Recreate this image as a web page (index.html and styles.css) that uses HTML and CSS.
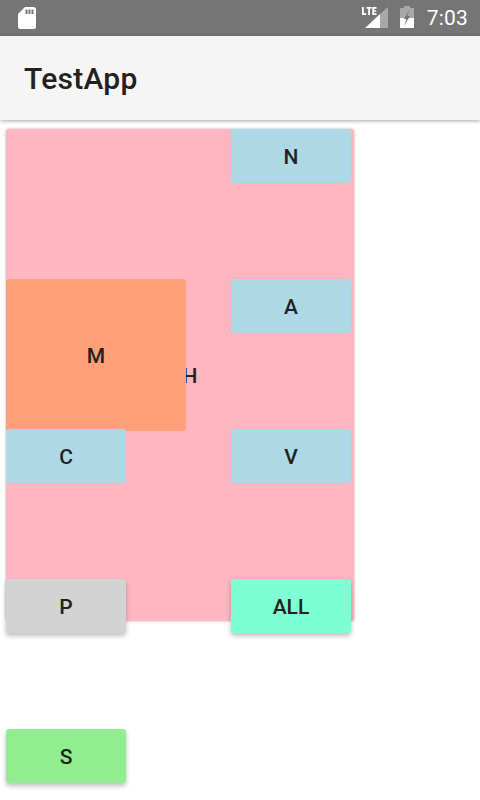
FILE: index.html
```html
<!DOCTYPE html>
<html>
<head>
    <meta charset="utf-8"/>
    <title>TestApp</title>
    <link rel="stylesheet" href="styles.css">
</head>
<body>
    <div class="status">
        <svg class="sd" width="18" height="22" viewBox="0 0 18 22">
            <path fill="#fff" d="M7 0H15.500Q18 0 18 2.500V19.500Q18 22 15.500 22H2.500Q0 22 0 19.500V7Z"/>
            <path fill="#757575" d="M7.500 2.500H9.500V7H7.500ZM10.500 2.500H12.500V7H10.500ZM13.500 2.500H15.500V7H13.500Z"/>
        </svg>
        <span class="status-right">
            <svg class="signal" width="26" height="22" viewBox="0 0 26 22">
                <path fill="#a8a8a8" d="M26 1V22H18V8Z"/>
                <path fill="#fff" d="M18 8V22H3Z"/>
                <path fill="#fff" d="M0 1H1.800V7.300H4.200V9H0ZM4.600 1H9.600V2.700H8V9H6.200V2.700H4.600ZM10.300 1H14.500V2.700H12.100V4.200H14.200V5.800H12.100V7.300H14.500V9H10.300Z"/>
            </svg>
            <svg class="battery" width="14" height="22" viewBox="0 0 14 22">
                <path fill="#a8a8a8" d="M4 0H10V2H14V12H0V2H4Z"/>
                <path fill="#fff" d="M0 12H14V22H0Z"/>
                <path fill="#757575" d="M9.500 4L4 13H6.500L4 20L10 10H7.500Z"/>
            </svg>
            <span class="clock">7:03</span>
        </span>
    </div>
    <header class="appbar">TestApp</header>
    <main class="board">
        <div class="btn pink">H</div>
        <div class="btn blue n">N</div>
        <div class="btn blue a">A</div>
        <div class="btn salmon">M</div>
        <div class="btn blue c">C</div>
        <div class="btn blue v">V</div>
        <div class="btn gray raised p">P</div>
        <div class="btn mint raised all">ALL</div>
        <div class="btn green raised s">S</div>
    </main>
</body>
</html>
```
FILE: styles.css
```css
html, body {
    margin: 0;
    height: 100%;
    overflow: hidden;
    background-color: #fff;
}
body {
    font-family: "Roboto", "Liberation Sans", sans-serif;
    color: #212121;
}
.status {
    height: 36px;
    background-color: #757575;
    display: flex;
    align-items: center;
    justify-content: space-between;
    padding: 0 12px 0 18px;
}
.sd {
    margin-top: -1px;
}
.status-right {
    display: flex;
    align-items: center;
}
.signal {
    margin-top: -2px;
}
.battery {
    margin: -2px 13px 0 12px;
}
.clock {
    color: #fff;
    font-size: 21px;
    letter-spacing: .2px;
}
.appbar {
    height: 84px;
    box-sizing: border-box;
    line-height: 84px;
    padding: 1px 0 0 24px;
    background-color: #f5f5f5;
    font-size: 30px;
    font-weight: 500;
    letter-spacing: .25px;
    box-shadow: 0 1px 4px rgba(0,0,0,.35);
    position: relative;
}
.board {
    display: grid;
    grid-template-columns: 120px 60px 45px 120px 3px;
    grid-template-rows: 150px 150px 150px 150px 54px;
    padding: 9px 0 0 6px;
}
.btn {
    display: flex;
    align-items: center;
    justify-content: center;
    height: 54px;
    box-sizing: border-box;
    padding-top: 2px;
    border-radius: 3px;
    font-size: 21px;
    font-weight: 500;
}
.raised {
    box-shadow: 0 3px 5px rgba(0,0,0,.25);
}
.pink {
    grid-column: 1 / 6;
    grid-row: 1 / 5;
    height: 492px;
    padding-left: 20px;
    background-color: #ffb6c1;
    box-shadow: 0 0 3px rgba(0,0,0,.3);
}
.blue { background-color: #add8e6; }
.salmon {
    grid-column: 1 / 3;
    grid-row: 2;
    height: 152px;
    background-color: #ffa07a;
}
.gray { background-color: #d3d3d3; }
.mint { background-color: #7fffd4; }
.green { background-color: #90ee90; }
.n { grid-column: 4; grid-row: 1; }
.a { grid-column: 4; grid-row: 2; }
.c { grid-column: 1; grid-row: 3; }
.v { grid-column: 4; grid-row: 3; }
.p { grid-column: 1; grid-row: 4; }
.all { grid-column: 4; grid-row: 4; }
.s { grid-column: 1; grid-row: 5; }
```
